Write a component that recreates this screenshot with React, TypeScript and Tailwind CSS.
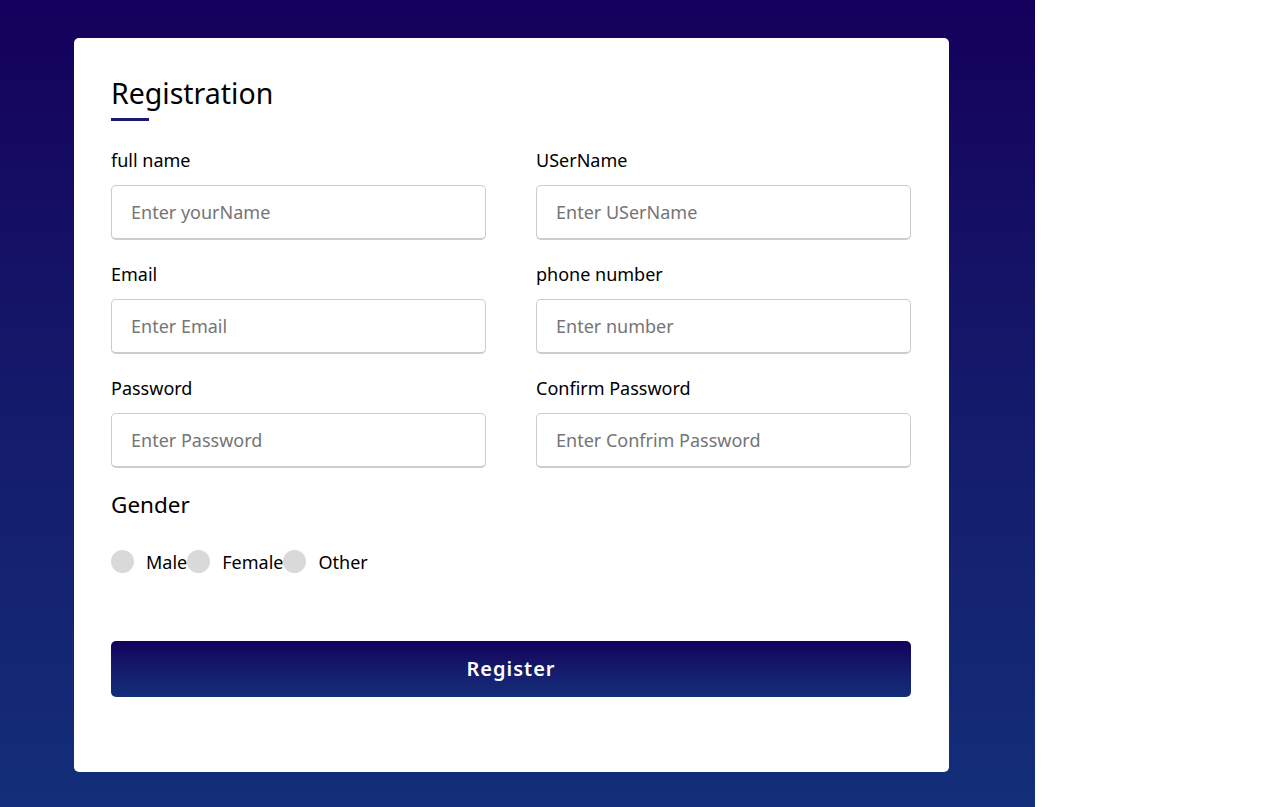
import React from "react";

const fields = [
  { label: "full name", placeholder: "Enter yourName" },
  { label: "USerName", placeholder: "Enter USerName" },
  { label: "Email", placeholder: "Enter Email" },
  { label: "phone number", placeholder: "Enter number" },
  { label: "Password", placeholder: "Enter Password" },
  { label: "Confirm Password", placeholder: "Enter Confrim Password" },
];

const genders = ["Male", "Female", "Other"];

const Field = ({ label, placeholder }: any) => (
  <div className="flex flex-col">
    <label className="text-[18px] leading-[22px] text-black mb-[14px]">{label}</label>
    <input
      type="text"
      placeholder={placeholder}
      className="h-[55px] w-full rounded-[5px] border border-[#cccccc] border-b-2 px-[19px] text-[18px] text-black placeholder:text-[#757575] outline-none"
    />
  </div>
);

export default function App() {
  return (
    <div className="w-[1282px] h-[807px] bg-white flex" style={{ fontFamily: '"Noto Sans", "Open Sans", sans-serif' }}>
      <div className="w-[1035px] h-[807px] bg-gradient-to-b from-[#14005c] to-[#132e7a] pl-[74px] pt-[38px]">
        <div className="w-[875px] h-[734px] bg-white rounded-[5px] pl-[37px] pr-[38px] pt-[37px]">
          <h1 className="text-[28.5px] leading-[36px] text-black">Registration</h1>
          <div className="w-[38px] h-[3px] bg-[#1a1a6e] mt-[7px]" />
          <form className="mt-[28px]">
            <div className="grid grid-cols-2 gap-x-[50px] gap-y-[23px]">
              {fields.map((f) => (
                <Field key={f.label} label={f.label} placeholder={f.placeholder} />
              ))}
            </div>
            <div className="mt-[23px] text-[22.5px] leading-[28px] text-black">Gender</div>
            <div className="mt-[31px] flex items-center">
              {genders.map((g) => (
                <label key={g} className="flex items-center">
                  <span className="w-[23px] h-[23px] rounded-full bg-[#d9d9d9]" />
                  <span className="ml-[12px] text-[18px] leading-[22px] text-black">{g}</span>
                </label>
              ))}
            </div>
            <button
              type="button"
              className="mt-[68px] w-full h-[56px] rounded-[5px] bg-gradient-to-b from-[#14005c] to-[#132e7a] text-white text-[20px] font-semibold tracking-[1px]"
            >
              Register
            </button>
          </form>
        </div>
      </div>
    </div>
  );
}
